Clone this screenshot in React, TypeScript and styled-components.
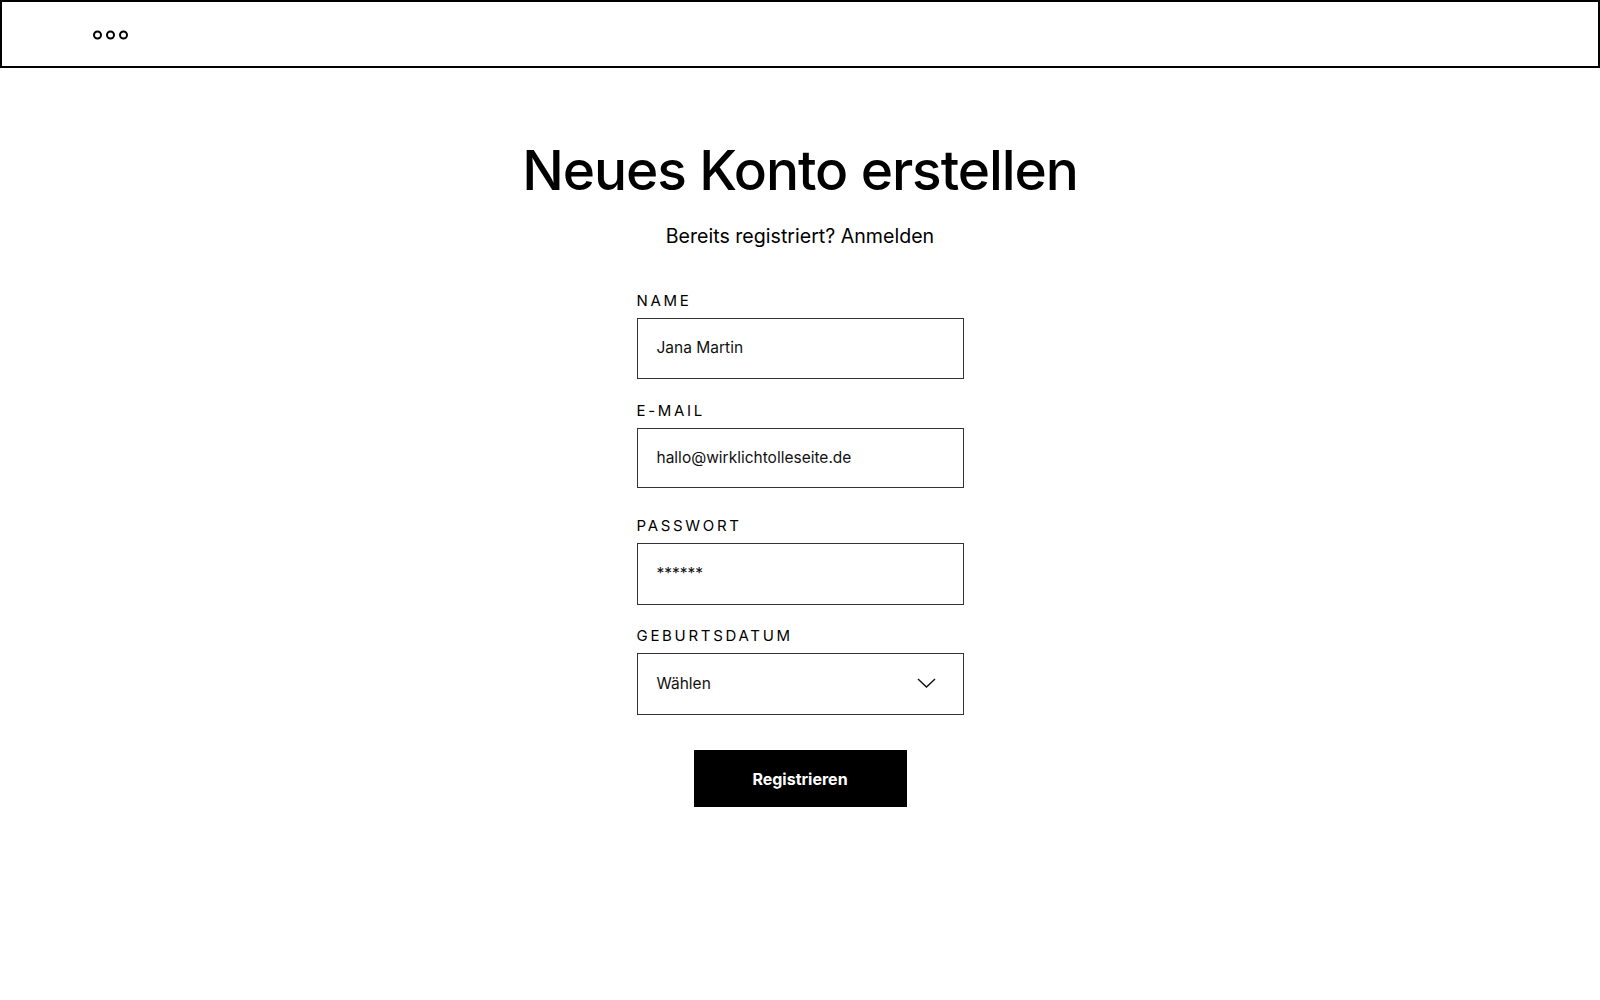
import React from "react";
import styled, { createGlobalStyle } from "styled-components";

const GlobalStyle = createGlobalStyle`
  html, body { margin: 0; padding: 0; background: #ffffff; }
  body { font-family: Inter, "Noto Sans", sans-serif; color: #000; }
  * { box-sizing: border-box; }
`;

const Page = styled.div`
  width: 1600px;
  min-height: 1000px;
  display: flex;
  flex-direction: column;
`;

const TopBar = styled.header`
  height: 68px;
  border: 2px solid #000;
  display: flex;
  align-items: center;
  padding-left: 91px;
  padding-top: 2px;
`;

const Main = styled.main`
  display: flex;
  flex-direction: column;
  align-items: center;
  padding-top: 66px;
`;

const Title = styled.h1`
  margin: 0;
  font-family: Inter, sans-serif;
  font-weight: 500;
  font-size: 55px;
  line-height: 72px;
  letter-spacing: -1.1px;
`;

const Subtitle = styled.p`
  margin: 18px 0 0;
  font-family: Inter, sans-serif;
  font-size: 19.6px;
  line-height: 24px;
  font-weight: 400;
`;

const Form = styled.form`
  width: 327px;
  margin-top: 43px;
  display: flex;
  flex-direction: column;
`;

const Field = styled.div<{ $gap: number }>`
  display: flex;
  flex-direction: column;
  margin-bottom: ${(p) => p.$gap}px;
`;

const Label = styled.label`
  font-family: Inter, sans-serif;
  font-size: 15px;
  line-height: 20px;
  letter-spacing: 2.7px;
  font-weight: 400;
  text-transform: uppercase;
  margin-bottom: 7px;
`;

const Input = styled.input<{ $h: number }>`
  height: ${(p) => p.$h}px;
  width: 100%;
  border: 1.5px solid #333;
  border-radius: 0;
  padding: 0 19px 2px;
  font-family: Inter, sans-serif;
  font-size: 15.5px;
  color: #111;
  background: #fff;
  outline: none;
`;

const Select = styled.div`
  height: 62px;
  border: 1.5px solid #333;
  display: flex;
  align-items: center;
  justify-content: space-between;
  padding: 0 27px 2px 19px;
  font-family: Inter, sans-serif;
  font-size: 15.5px;
  color: #111;
`;

const Submit = styled.button`
  align-self: center;
  margin-top: 35px;
  width: 213px;
  height: 57px;
  background: #000;
  color: #fff;
  border: none;
  border-radius: 0;
  font-family: Inter, sans-serif;
  font-weight: 700;
  font-size: 16px;
  cursor: pointer;
`;

const Dots = () => (
  <svg width="36" height="10" viewBox="0 0 36 10" fill="none" stroke="#000" strokeWidth="2">
    <circle cx="4.5" cy="5" r="3.5" />
    <circle cx="17.5" cy="5" r="3.5" />
    <circle cx="30.5" cy="5" r="3.5" />
  </svg>
);

const Chevron = () => (
  <svg width="19" height="10" viewBox="0 0 19 10" fill="none" stroke="#111" strokeWidth="1.4">
    <path d="M1 1 L9.5 9 L18 1" />
  </svg>
);

export default function App() {
  return (
    <Page>
      <GlobalStyle />
      <TopBar>
        <Dots />
      </TopBar>
      <Main>
        <Title>Neues Konto erstellen</Title>
        <Subtitle>Bereits registriert? Anmelden</Subtitle>
        <Form onSubmit={(e) => e.preventDefault()}>
          <Field $gap={22}>
            <Label>Name</Label>
            <Input $h={61} readOnly defaultValue="Jana Martin" />
          </Field>
          <Field $gap={28}>
            <Label>E-Mail</Label>
            <Input $h={60} readOnly defaultValue="hallo@wirklichtolleseite.de" />
          </Field>
          <Field $gap={21}>
            <Label>Passwort</Label>
            <Input $h={62} readOnly defaultValue="******" />
          </Field>
          <Field $gap={0}>
            <Label>Geburtsdatum</Label>
            <Select>
              <span>Wählen</span>
              <Chevron />
            </Select>
          </Field>
          <Submit type="submit">Registrieren</Submit>
        </Form>
      </Main>
    </Page>
  );
}
